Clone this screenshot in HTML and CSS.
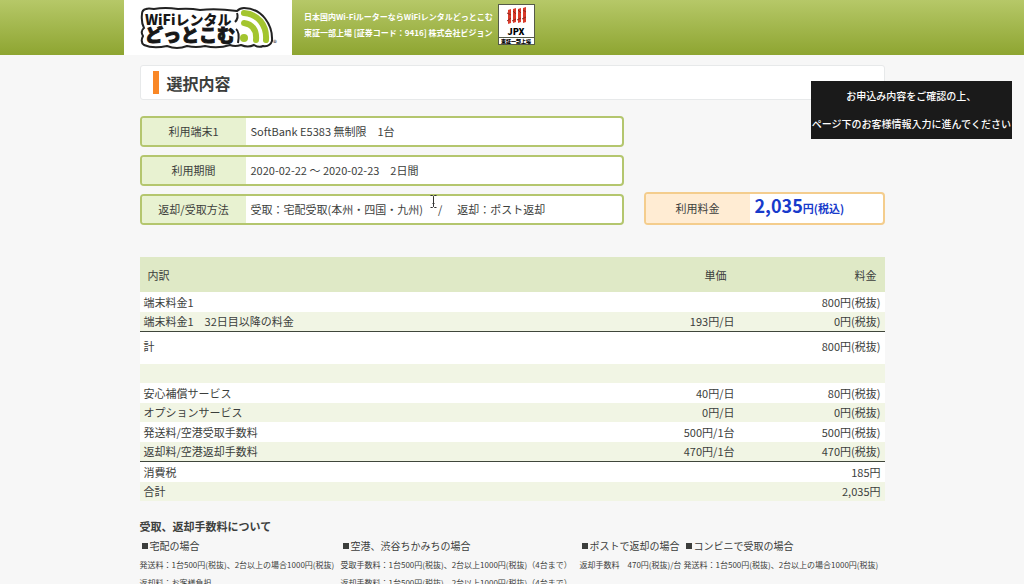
FILE: index.html
```html
<!DOCTYPE html>
<html lang="ja">
<head>
<meta charset="utf-8">
<title>選択内容</title>
<link rel="stylesheet" href="styles.css">
</head>
<body>
<header class="site-header">
  <div class="header-inner">
    <a class="logo" href="#" aria-label="WiFiレンタルどっとこむ">
      <svg width="168" height="55" viewBox="0 0 168 55">
        <path d="M22 9Q24 8 30 9Q41 7 54 9Q66 8 76 10Q92 8 113 11Q116 8 120 8C138 8 149 25 148 41Q146 47 139 46Q135 48 130 45Q124 48 117 45Q111 47 106 45Q94 49 81 46Q72 48 63 46Q53 50 43 46Q29 49 20 45Q16 42 19 36Q16 31 20 28Q17 22 18 14Q18 10 22 9Z" fill="#fff" stroke="#222" stroke-width="2"/>
        <g fill="#171717">
          <text x="21" y="25" class="logo-top">WiFiレンタル</text>
          <text x="21" y="42" class="logo-bottom">どっとこむ</text>
        </g>
        <path d="M111 22Q115 18 113 13M112 29Q116 32 114 43" fill="none" stroke="#222" stroke-width="2"/>
        <g fill="none" stroke="#a3c52f" stroke-width="6" stroke-linecap="round">
          <path d="M120 13C134 14 143 25 142 40"/>
          <path d="M120 23C128 24 133 30 132 40"/>
        </g>
        <circle cx="120" cy="38" r="4" fill="#a3c52f"/>
        <text x="149" y="46" class="logo-mark">®</text>
      </svg>
    </a>
    <p class="tagline">日本国内Wi-FiルーターならWiFiレンタルどっとこむ<br>東証一部上場 [証券コード：9416] 株式会社ビジョン</p>
    <svg class="jpx" width="37" height="41" viewBox="0 0 37 41">
      <rect x=".5" y=".5" width="36" height="40" fill="#fff" stroke="#555b48"/>
      <path d="M10 6l3-1v14l-3 1zM15 5l3-1v14l-3 1zM20 5l3-1v14l-3 1zM25 4l3-1v15l-3 1z" fill="#d93a2b"/>
      <path d="M9 9l4 2M15 7l3 3M20 6l3 3M25 6l3 2M9 17l4-3M14 17l4-2M19 16l4-2M24 15l4-2" stroke="#8d2820" fill="none"/>
      <text x="18" y="31" text-anchor="middle" class="jpx-name">JPX</text>
      <path d="M1 33.500h35" stroke="#555b48"/>
      <text x="18" y="39" text-anchor="middle" class="jpx-note">東証一部上場</text>
    </svg>
  </div>
</header>

<main class="content">
  <h1 class="page-title">選択内容</h1>

  <section class="summary">
    <dl class="choices">
      <div class="choice"><dt>利用端末1</dt><dd>SoftBank E5383 無制限　1台</dd></div>
      <div class="choice"><dt>利用期間</dt><dd>2020-02-22 ～ 2020-02-23　2日間</dd></div>
      <div class="choice"><dt>返却/受取方法</dt><dd class="methods"><span>受取：宅配受取(本州・四国・九州)　</span><span>/</span><span>　返却：ポスト返却</span></dd></div>
    </dl>
    <dl class="price">
      <div class="choice choice-price"><dt>利用料金</dt><dd><span class="amount">2,035</span>円(税込)</dd></div>
    </dl>
  </section>

  <table class="breakdown">
    <thead>
      <tr><th class="item">内訳</th><th class="unit">単価</th><th class="fee">料金</th></tr>
    </thead>
    <tbody>
      <tr><td>端末料金1</td><td></td><td>800円(税抜)</td></tr>
      <tr class="ruled"><td>端末料金1　32日目以降の料金</td><td>193円/日</td><td>0円(税抜)</td></tr>
      <tr class="subtotal"><td>計</td><td></td><td>800円(税抜)</td></tr>
      <tr><td></td><td></td><td></td></tr>
      <tr><td>安心補償サービス</td><td>40円/日</td><td>80円(税抜)</td></tr>
      <tr><td>オプションサービス</td><td>0円/日</td><td>0円(税抜)</td></tr>
      <tr><td>発送料/空港受取手数料</td><td>500円/1台</td><td>500円(税抜)</td></tr>
      <tr class="ruled"><td>返却料/空港返却手数料</td><td>470円/1台</td><td>470円(税抜)</td></tr>
      <tr><td>消費税</td><td></td><td>185円</td></tr>
      <tr><td>合計</td><td></td><td>2,035円</td></tr>
    </tbody>
  </table>

  <section>
    <h2 class="notes-title">受取、返却手数料について</h2>
    <div class="notes">
      <div>
        <h3>宅配の場合</h3>
        <p>発送料：1台500円(税抜)、2台以上の場合1000円(税抜)</p>
        <p>返却料：お客様負担</p>
      </div>
      <div>
        <h3>空港、渋谷ちかみちの場合</h3>
        <p>受取手数料：1台500円(税抜)、2台以上1000円(税抜)（4台まで）</p>
        <p>返却手数料：1台500円(税抜)、2台以上1000円(税抜)（4台まで）</p>
      </div>
      <div>
        <h3>ポストで返却の場合</h3>
        <p>返却手数料　470円(税抜)/台</p>
      </div>
      <div>
        <h3>コンビニで受取の場合</h3>
        <p>発送料：1台500円(税抜)、2台以上の場合1000円(税抜)</p>
      </div>
    </div>
  </section>
</main>

<aside class="guide">お申込み内容をご確認の上、<br>ページ下のお客様情報入力に進んでください</aside>
<svg class="pointer" width="7" height="13" viewBox="0 0 7 13"><path d="M.5.5h2l1 1 1-1h2M3.500 1.500v10M.5 12.500h2l1-1 1 1h2M2.500 8.500h2" fill="none" stroke="#333"/></svg>
</body>
</html>
```
FILE: styles.css
```css
* { box-sizing: border-box; }

html { height: 100%; overflow: hidden; }

body {
  height: 100%;
  margin: 0;
  overflow: hidden;
  background: #f7f7f7;
  color: #3c3e3c;
  font-family: "Noto Sans CJK JP", sans-serif;
  font-size: 11px;
}

h1, h2, h3, p, dl, dd { margin: 0; }

.site-header {
  background: linear-gradient(#b6c868, #8ea531);
}

.header-inner {
  display: flex;
  align-items: flex-start;
  max-width: 776px;
  margin: 0 auto;
}

.logo {
  flex: none;
  height: 55px;
  background: #fff;
}

.logo text, .jpx text { font-weight: 900; }
.logo .logo-top { font-size: 14px; }
.logo .logo-bottom { font-size: 18px; stroke: #171717; }
.logo .logo-mark { font-size: 8px; font-weight: 400; fill: #333; }

.tagline {
  margin: 9px 5px 0 12px;
  color: #fff;
  font-size: 8px;
  font-weight: 700;
  line-height: 16px;
  white-space: nowrap;
}

.jpx { flex: none; margin-top: 4px; }
.jpx .jpx-name { font-size: 9px; }
.jpx .jpx-note { font-size: 5px; }

.content {
  max-width: 745px;
  margin: 0 auto;
  padding-top: 10px;
}

.page-title {
  display: flex;
  align-items: center;
  gap: 8px;
  height: 35px;
  padding-left: 12px;
  border: 1px solid #e7e9ea;
  border-radius: 3px;
  background: #fff;
  font-size: 16px;
  line-height: 24px;
}

.page-title::before {
  content: "";
  width: 6px;
  height: 23px;
  background: #f98726;
}

.summary {
  display: grid;
  grid-template-columns: 484fr 241fr;
  align-items: end;
  gap: 20px;
  margin-top: 16px;
}

.choices { display: grid; gap: 8px; }

.choice {
  display: grid;
  grid-template-columns: 104px 1fr;
  border: 2px solid #b4c66e;
  border-radius: 4px;
  overflow: hidden;
  background: #fff;
  line-height: 27px;
}

.choice dt { background: #e8f2d1; text-align: center; }
.choice dd { padding-left: 5px; white-space: nowrap; }
.choice .methods { display: flex; gap: 4px; }

.choice-price { border-color: #f4cd8d; line-height: 29px; }
.choice-price dt { background: #ffecd3; }
.choice-price dd { color: #173bcb; font-weight: 700; }
.amount { font-size: 18px; line-height: 20px; }

.breakdown {
  width: 100%;
  margin-top: 32px;
  border-collapse: separate;
  border-spacing: 0;
  table-layout: fixed;
}

.breakdown th {
  height: 35px;
  padding: 0 8px;
  background: #dfe9c6;
  font-weight: 400;
  text-align: right;
}

.breakdown .item { width: 60%; text-align: left; }
.breakdown .unit { padding-right: 12px; }
.breakdown .fee { width: 146px; }

.breakdown td {
  height: 20px;
  padding: 0 4px;
  background: #fff;
  line-height: 19px;
  text-align: right;
}

.breakdown td:first-child { text-align: left; }
.breakdown tbody tr:nth-child(even) td { height: 19px; background: #f1f5e4; }
.breakdown tbody .ruled td { height: 20px; border-bottom: 1px solid #3f463b; }
.breakdown .subtotal td { height: 32px; padding-bottom: 3px; }

.notes-title {
  margin-top: 17px;
  font-size: 11px;
  line-height: 16px;
}

.notes {
  display: grid;
  grid-template-columns: 201fr 239fr 104fr 201fr;
  margin-top: 3px;
  white-space: nowrap;
}

.notes h3 {
  display: flex;
  align-items: center;
  gap: 2px;
  padding-left: 2px;
  font-size: 10px;
  font-weight: 400;
  line-height: 18px;
}

.notes h3::before {
  content: "";
  width: 6px;
  height: 6px;
  background: #3c3e3c;
}

.notes p { padding-top: 2px; font-size: 8px; line-height: 16px; }

.guide {
  position: absolute;
  top: 81px;
  right: 12px;
  padding: 1px;
  background: #1a1a1a;
  color: #fff;
  font-size: 10px;
  font-weight: 500;
  line-height: 28px;
  text-align: center;
}

.pointer { position: absolute; top: 195px; left: 430px; }
```
